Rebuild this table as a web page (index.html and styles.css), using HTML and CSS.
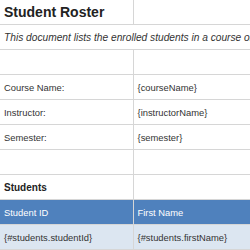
FILE: index.html
```html
<!DOCTYPE html>
<html lang="en">
<head>
    <meta charset="UTF-8">
    <meta name="viewport" content="width=device-width, initial-scale=1.0">
    <title>Student Roster</title>
    <link rel="stylesheet" href="styles.css">
</head>
<body>
    <table class="sheet">
        <colgroup>
            <col class="col-label">
            <col class="col-value">
        </colgroup>
        <tr>
            <td class="title">Student Roster</td>
            <td></td>
        </tr>
        <tr>
            <td class="note" colspan="2">This document lists the enrolled students in a course or class section.</td>
        </tr>
        <tr><td></td><td></td></tr>
        <tr>
            <td>Course Name:</td>
            <td>{courseName}</td>
        </tr>
        <tr>
            <td>Instructor:</td>
            <td>{instructorName}</td>
        </tr>
        <tr>
            <td>Semester:</td>
            <td>{semester}</td>
        </tr>
        <tr><td></td><td></td></tr>
        <tr>
            <td class="section">Students</td>
            <td></td>
        </tr>
        <tr class="head">
            <td>Student ID</td>
            <td>First Name</td>
        </tr>
        <tr class="data">
            <td>{#students.studentId}</td>
            <td>{#students.firstName}</td>
        </tr>
    </table>
</body>
</html>
```

FILE: styles.css
```css
body {
    margin: 0;
    padding: 0;
    overflow: hidden;
    background: #fff;
    font-family: 'Liberation Sans', Arial, sans-serif;
}
.sheet {
    border-collapse: collapse;
    table-layout: fixed;
    width: 340px;
}
.col-label {
    width: 133px;
}
.col-value {
    width: 207px;
}
.sheet td {
    height: 24px;
    padding: 0 3px 0 4px;
    border-right: 1px solid #d6d6d6;
    border-bottom: 1px solid #d6d6d6;
    font-size: 9.4px;
    color: #333;
    white-space: nowrap;
    overflow: visible;
    vertical-align: middle;
}
.sheet .title {
    font-size: 14px;
    font-weight: bold;
    color: #222;
}
.sheet .note {
    font-size: 10.2px;
    font-style: italic;
    overflow: hidden;
}
.sheet .section {
    font-weight: bold;
    font-size: 10px;
    color: #222;
}
.head td {
    background: #4f81bd;
    color: #fff;
}
.data td {
    background: #dce6f1;
}
```
